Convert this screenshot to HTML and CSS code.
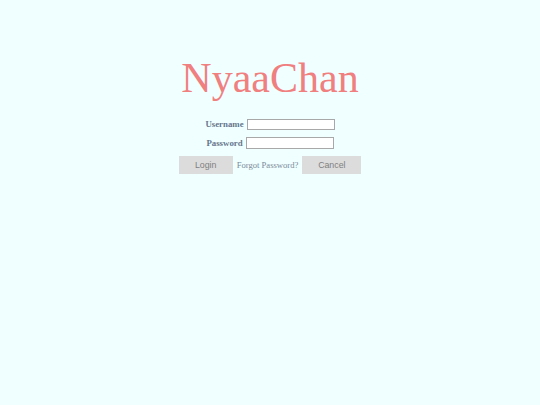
FILE: index.html
```html
<!DOCTYPE html>
<html>
<head>
<meta charset="utf-8">
<link rel="stylesheet" href="styles.css">
</head>
<body>
<div class="page">
  <h1 class="title">NyaaChan</h1>
  <form class="login">
    <div class="row"><label class="label">Username</label><input class="field" type="text"></div>
    <div class="row"><label class="label">Password</label><input class="field" type="password"></div>
    <div class="actions">
      <button type="button" class="btn login-btn">Login</button>
      <a class="forgot">Forgot Password?</a>
      <button type="button" class="btn cancel-btn">Cancel</button>
    </div>
  </form>
</div>
</body>
</html>
```
FILE: styles.css
```css
html, body {
  margin: 0;
  padding: 0;
  background: #f0ffff;
  height: 100%;
}
.page {
  display: flex;
  flex-direction: column;
  align-items: center;
  font-family: "Liberation Serif", serif;
}
.title {
  margin: 52px 0 0 0;
  font-weight: normal;
  font-size: 42px;
  line-height: 52px;
  color: #f08080;
}
.login {
  display: flex;
  flex-direction: column;
  align-items: center;
  margin-top: 11px;
}
.row {
  display: flex;
  align-items: center;
  gap: 3px;
  height: 18.5px;
}
.label {
  font-size: 8.8px;
  font-weight: bold;
  color: #66768c;
}
.field {
  box-sizing: border-box;
  width: 88px;
  height: 11.5px;
  margin: 0;
  padding: 0;
  border: 1px solid #a8a8a8;
  background: #fff;
}
.actions {
  display: flex;
  align-items: center;
  gap: 4px;
  margin-top: 4px;
}
.btn {
  box-sizing: border-box;
  height: 18px;
  border: none;
  background: #dcdcdc;
  color: #808080;
  font-family: "Liberation Sans", sans-serif;
  font-size: 8.8px;
  padding: 0;
}
.login-btn { width: 54px; }
.cancel-btn { width: 59px; }
.forgot {
  font-size: 8.6px;
  color: #7a8a9a;
}
```
